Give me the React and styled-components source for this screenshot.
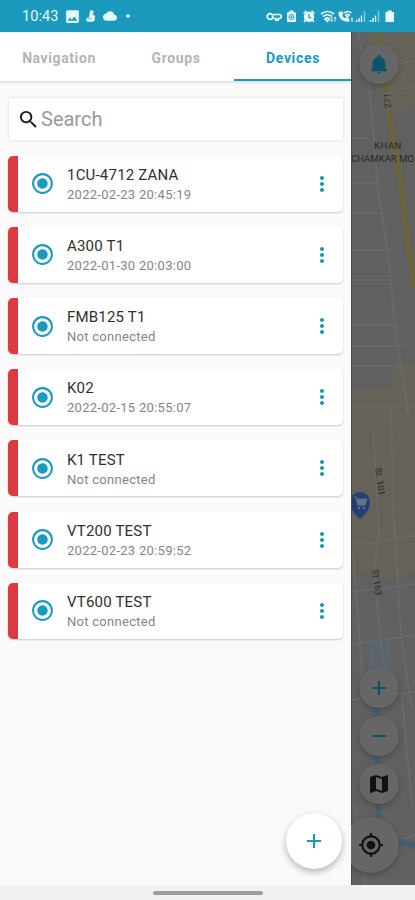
import { useState } from "react";
import styled, { createGlobalStyle } from "styled-components";
import {
    MdAdd,
    MdCloud,
    MdImage,
    MdMap,
    MdMoreVert,
    MdMyLocation,
    MdRadioButtonChecked,
    MdRemove,
    MdSearch,
} from "react-icons/md";

const tabs = ["Navigation", "Groups", "Devices"];

const devices = [
    { name: "1CU-4712 ZANA", status: "2022-02-23 20:45:19" },
    { name: "A300 T1", status: "2022-01-30 20:03:00" },
    { name: "FMB125 T1", status: "Not connected" },
    { name: "K02", status: "2022-02-15 20:55:07" },
    { name: "K1 TEST", status: "Not connected" },
    { name: "VT200 TEST", status: "2022-02-23 20:59:52" },
    { name: "VT600 TEST", status: "Not connected" },
];

const GlobalStyle = createGlobalStyle`
    * {
        box-sizing: border-box;
    }
    body {
        margin: 0;
        font-family: Roboto, "Liberation Sans", sans-serif;
        background: #f1f1f1;
    }
    button, input {
        font-family: inherit;
        border: 0;
        padding: 0;
        background: none;
    }
`;

const Screen = styled.div`
    display: flex;
    flex-direction: column;
    width: 415px;
    height: 900px;
    overflow: hidden;
`;

const StatusBar = styled.header`
    display: flex;
    justify-content: space-between;
    align-items: center;
    height: 32px;
    padding: 0 19px 0 22px;
    background: #1c9abd;
    color: #e9f8fc;
`;

const Time = styled.span`
    font-size: 14.5px;
    line-height: 16px;
    padding-top: 2px;
    margin-right: 5px;
    letter-spacing: 0.1px;
`;

const StatusGroup = styled.div`
    display: flex;
    align-items: center;
`;

const Body = styled.div`
    display: flex;
    height: 853px;
`;

const Drawer = styled.aside`
    position: relative;
    display: flex;
    flex-direction: column;
    width: 351px;
    height: 100%;
    background: #fafafa;
`;

const TabRow = styled.nav`
    display: grid;
    grid-template-columns: repeat(3, 1fr);
    height: 49px;
    background: #fff;
    box-shadow: 0 1px 3px rgba(0, 0, 0, 0.16);
`;

const Tab = styled.button`
    border-bottom: 2px solid ${({ $active }) => ($active ? "#1c9abd" : "transparent")};
    color: ${({ $active }) => ($active ? "#1c9abd" : "#b4b4b4")};
    font-size: 14px;
    font-weight: 700;
    letter-spacing: 0.6px;
    padding: 4px 0 0 1px;

    ${({ $active }) => $active && "letter-spacing: 0.65px;"}
`;

const SearchBox = styled.label`
    display: flex;
    align-items: center;
    height: 42px;
    margin: 17px 8px 0 9px;
    padding-left: 8px;
    background: #fff;
    color: #1b1b1b;
    box-shadow: 0 0 3px rgba(0, 0, 0, 0.14);
`;

const SearchInput = styled.input`
    width: 250px;
    margin-left: 1px;
    font-size: 20px;
    outline: none;

    &::placeholder {
        color: #999;
    }
`;

const DeviceList = styled.div`
    display: flex;
    flex-direction: column;
    gap: 15.2px;
    padding: 15.7px 8px 0;
`;

const DeviceCard = styled.article`
    display: flex;
    align-items: center;
    height: 56px;
    padding: 0 9px 0 12px;
    border-left: 10.500px solid #dc3a3e;
    border-radius: 5px;
    background: #fff;
    color: #1c9abd;
    box-shadow: 0 1px 2px rgba(0, 0, 0, 0.2);
`;

const DeviceText = styled.div`
    flex: 1;
    margin-left: 12px;
    padding-top: 2.4px;
`;

const DeviceName = styled.div`
    color: #303030;
    font-size: 15px;
    line-height: 19px;
    letter-spacing: 0.2px;
`;

const DeviceStatus = styled.div`
    color: #858585;
    font-size: 13px;
    line-height: 19px;
    letter-spacing: 0.28px;
`;

const MenuButton = styled.button`
    display: flex;
    color: #159aa5;
`;

const AddButton = styled.button`
    position: absolute;
    right: 9px;
    bottom: 16px;
    display: flex;
    align-items: center;
    justify-content: center;
    width: 56px;
    height: 56px;
    border-radius: 50%;
    background: #fff;
    color: #1c9abd;
    box-shadow: 0 3px 7px rgba(0, 0, 0, 0.28);
`;

const MapPane = styled.main`
    position: relative;
    width: 64px;
    height: 100%;
    overflow: hidden;
    background: #606060;

    > svg {
        display: block;
    }
`;

const MapButton = styled.button`
    position: absolute;
    top: ${({ $top }) => $top}px;
    left: ${({ $left }) => $left}px;
    display: flex;
    align-items: center;
    justify-content: center;
    width: ${({ $size }) => $size}px;
    height: ${({ $size }) => $size}px;
    border-radius: 50%;
    background: #666;
    color: ${({ $dark }) => ($dark ? "#111" : "#0e5468")};
    box-shadow: 0 2px 5px rgba(0, 0, 0, 0.25);
`;

const GestureBar = styled.footer`
    display: flex;
    justify-content: center;
    height: 15px;
    padding-top: 6px;
    background: #f1f1f1;

    &::after {
        content: "";
        width: 110px;
        height: 4px;
        border-radius: 2px;
        background: #9c9c9c;
    }
`;

const PictureIcon = styled(MdImage)`
    margin-left: 0;
`;

const CloudIcon = styled(MdCloud)`
    margin-left: 5px;
`;

const TouchIcon = styled.svg`
    margin-left: 4px;
`;

const DotIcon = styled.svg`
    margin-left: 9px;
`;

const LeftStatusIcons = () => (
    <>
        <PictureIcon size={17} />
        <TouchIcon width="13" height="14" viewBox="0 0 13 14">
            <path d="M5 1.800c2.500-1.300 4.300.3 3.300 2.400L7.500 6c2.300-.3 3.500 1.600 2.200 3 .8 2-.6 3.800-2.700 3.800H3.500C1.500 12.800.6 10.800 1.800 9.300 2.300 8.600 3 8.400 4 8.400z" fill="currentColor" />
            <path d="M3.500 9.300h3" stroke="#1c9abd" strokeWidth=".8" />
        </TouchIcon>
        <CloudIcon size={14} />
        <DotIcon width="4" height="4" viewBox="0 0 4 4">
            <circle cx="2" cy="2" r="1.800" fill="currentColor" />
        </DotIcon>
    </>
);

const RightStatusIcons = () => (
    <svg width="130" height="16" viewBox="0 0 130 16" fill="none" stroke="currentColor">
        {/* vpn key */}
        <circle cx="4" cy="8.500" r="2.800" strokeWidth="1.700" />
        <path d="M7 6.500h6.300q2 0 2 2t-2 2h-1v1.600H9.800v-1.600H7" strokeWidth="1.600" />
        {/* battery saver */}
        <path d="M22.500 4h1.200V2.500h3.600V4h1.200q1.500 0 1.500 1.500V14h-9V5.500q0-1.500 1.500-1.500z" fill="currentColor" stroke="none" />
        <circle cx="25.500" cy="9" r="2.400" stroke="#1c9abd" />
        <path d="M25.500 7.800v2.400M24.300 9h2.400" stroke="#1c9abd" strokeWidth=".8" />
        {/* alarm */}
        <circle cx="43" cy="8.800" r="5.200" fill="currentColor" stroke="none" />
        <path d="M37.500 5.500l3-2.700M48.500 5.500l-3-2.700M39.500 12l-1.500 2M46.500 12l1.500 2" strokeWidth="1.600" />
        <path d="M43 5.800v3.300l2.200 1" stroke="#1c9abd" strokeWidth="1.200" />
        {/* wifi */}
        <path d="M55 6q6.500-5 13 0M57 8.500q4.500-3.500 9 0M59 11q2.500-2 4.500 0l-2 2.200z" strokeWidth="1.700" />
        <path d="M65.800 9v4.500m-1.300-1.300l1.300 1.300 1.300-1.300M69 13.500V9m-1.300 1.300L69 9l1.300 1.300" strokeWidth=".9" />
        {/* wifi calling */}
        <path d="M72.500 4c-.5 6 4 10 10.500 9.800l.5-3-3-1.500-1.700 1c-1.400-.8-2.200-1.900-2.700-3.200l1.300-1.200-1-2.700z" fill="currentColor" stroke="none" />
        <path d="M78 5q3.500-3 7.500 0M79.500 7q2-1.500 4 0l-2 2z" strokeWidth="1.300" />
        <path d="M86 9.500V14" strokeWidth="1.200" />
        {/* signal */}
        <path d="M90.500 14v-2M93 14v-4M95.500 14V7.500" strokeWidth="1.400" />
        <path d="M98.500 14V3" strokeWidth="1.300" opacity=".55" />
        <path d="M104.500 14v-2M107 14v-4M109.500 14V7.500" strokeWidth="1.400" />
        <path d="M112.500 14V3" strokeWidth="1.300" opacity=".55" />
        {/* battery */}
        <path d="M119.500 4h2.300V2.500h4V4h2.200v10h-8.500z" fill="currentColor" stroke="none" />
    </svg>
);

const StreetMap = () => (
    <svg width="64" height="853" viewBox="0 0 64 853">
        <rect width="64" height="853" fill="#606060" />
        <path d="M16 0h48v70L40 90 26 60z" fill="#656359" />
        <path d="M0 355h42l-2-18 24-8v210l-20 9-44-9z" fill="#656359" />
        <path d="M18 608h22v62H19z" fill="#5b646a" />
        <g fill="none" stroke="#6a6a6a" strokeWidth="1.600">
            <path d="M7 0l12 62 8 95 12 80 5 61 9 55 4 30" />
            <path d="M0 106h17M0 126h27M0 151h27M27 130l37-3M0 181h33M0 218h41M0 248h44M0 293h47M0 314h52M0 334h54M0 374h64" />
            <path d="M30 38l34-10M35 62l29-9" />
            <path d="M22 396l6 105-5 38 7 72 9 57M40 374l2 98 8 130 10 72M0 511h22l42-7M0 560l64-8M2 520l11 145M0 612l64-9M0 668l64-8" />
            <path d="M51 665l10 110M3 770l12 83M40 812l24-9" />
        </g>
        <path d="M27 0l9 60M37 78l4 20 9 55 5 45 9 60" fill="none" stroke="#69653f" strokeWidth="6" />
        <path d="M25 672l1 50 2 65M46 809l18 5" fill="none" stroke="#455f70" strokeWidth="6" />
        <g fill="#262626" fontFamily="Roboto, sans-serif" fontSize="9.500">
            <text x="37" y="117" textAnchor="middle" letterSpacing=".5">KHAN</text>
            <text x="0" y="129.500" textLength="63" lengthAdjust="spacing">CHAMKAR MO</text>
            <text transform="translate(24 436) rotate(82)" fontSize="9">St. 101</text>
            <text transform="translate(21 538) rotate(82)" fontSize="9">St 163</text>
            <text transform="translate(40 76) rotate(-95)" fontSize="9" fill="#392e2b">271</text>
        </g>
        <path d="M9 487q-10-8-10-17a10 10 0 0 1 20 0q0 9-10 17z" fill="#233f73" />
        <path d="M3 465h2l2 8h7l2-6H6" fill="#687083" stroke="#687083" />
        <circle cx="8" cy="476" r="1.200" fill="#687083" />
        <circle cx="13" cy="476" r="1.200" fill="#687083" />
        <path d="M.5 0v853" stroke="#494949" />
    </svg>
);

const BellIcon = () => (
    <svg width="22" height="22" viewBox="0 0 24 24" fill="currentColor">
        <path d="M21 19v1H3v-1l2-2v-6c0-3.100 2.030-5.830 5-6.710V4a2 2 0 0 1 4 0v.290c2.970.880 5 3.610 5 6.710v6l2 2m-7 2a2 2 0 0 1-4 0" />
    </svg>
);

const App = () => {
    const [activeTab, setActiveTab] = useState("Devices");
    const [search, setSearch] = useState("");

    const visibleDevices = devices.filter((device) =>
        device.name.toLowerCase().includes(search.toLowerCase())
    );

    return (
        <Screen>
            <GlobalStyle />
            <StatusBar>
                <StatusGroup>
                    <Time>10:43</Time>
                    <LeftStatusIcons />
                </StatusGroup>
                <StatusGroup>
                    <RightStatusIcons />
                </StatusGroup>
            </StatusBar>

            <Body>
                <Drawer>
                    <TabRow>
                        {tabs.map((tab) => (
                            <Tab key={tab} $active={tab === activeTab} onClick={() => setActiveTab(tab)}>
                                {tab}
                            </Tab>
                        ))}
                    </TabRow>
                    <SearchBox>
                        <MdSearch size={23} />
                        <SearchInput
                            placeholder="Search"
                            value={search}
                            onChange={(e) => setSearch(e.target.value)}
                        />
                    </SearchBox>
                    <DeviceList>
                        {visibleDevices.map((device) => (
                            <DeviceCard key={device.name}>
                                <MdRadioButtonChecked size={25} />
                                <DeviceText>
                                    <DeviceName>{device.name}</DeviceName>
                                    <DeviceStatus>{device.status}</DeviceStatus>
                                </DeviceText>
                                <MenuButton>
                                    <MdMoreVert size={24} />
                                </MenuButton>
                            </DeviceCard>
                        ))}
                    </DeviceList>
                    <AddButton>
                        <MdAdd size={24} />
                    </AddButton>
                </Drawer>

                <MapPane>
                    <StreetMap />
                    <MapButton $top={12} $left={8} $size={40}>
                        <BellIcon />
                    </MapButton>
                    <MapButton $top={636} $left={8} $size={40}>
                        <MdAdd size={24} />
                    </MapButton>
                    <MapButton $top={684} $left={8} $size={40}>
                        <MdRemove size={24} />
                    </MapButton>
                    <MapButton $top={732} $left={8} $size={40} $dark>
                        <MdMap size={24} />
                    </MapButton>
                    <MapButton $top={785} $left={-8} $size={56} $dark>
                        <MdMyLocation size={26} />
                    </MapButton>
                </MapPane>
            </Body>
            <GestureBar />
        </Screen>
    );
};

export default App;
